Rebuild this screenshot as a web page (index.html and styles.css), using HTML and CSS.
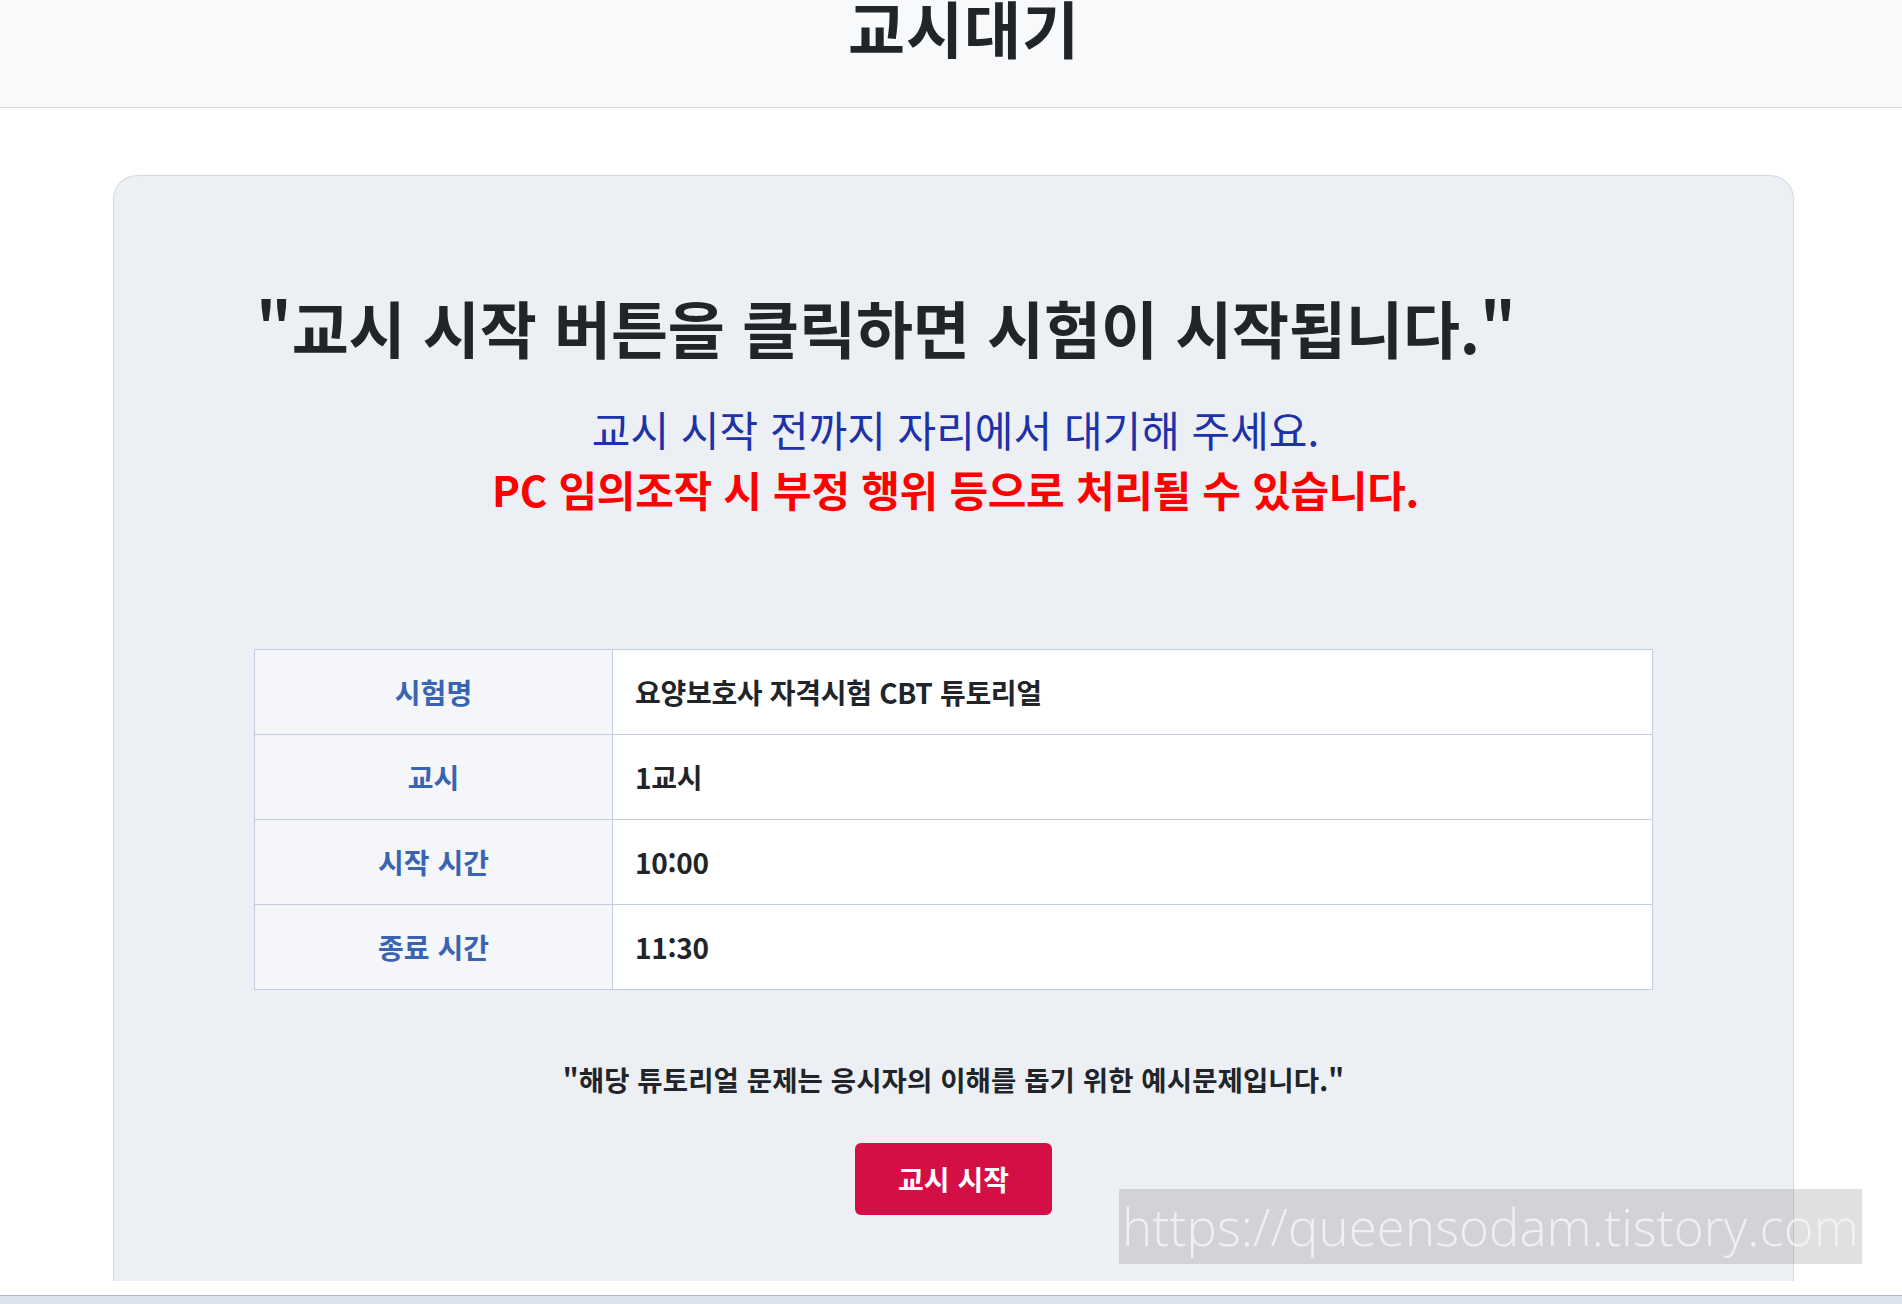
FILE: index.html
```html
<!DOCTYPE html>
<html lang="ko">
<head>
<meta charset="utf-8">
<title>교시대기</title>
<link rel="stylesheet" href="styles.css">
</head>
<body>
<header class="top">
  <h1 class="top-title">교시대기</h1>
</header>
<main class="card">
  <h2 class="lead">"교시 시작 버튼을 클릭하면 시험이 시작됩니다."</h2>
  <div class="notice">
    <p class="notice-wait">교시 시작 전까지 자리에서 대기해 주세요.</p>
    <p class="notice-warn">PC 임의조작 시 부정 행위 등으로 처리될 수 있습니다.</p>
  </div>
  <table class="info">
    <tr><th>시험명</th><td>요양보호사 자격시험 CBT 튜토리얼</td></tr>
    <tr><th>교시</th><td>1교시</td></tr>
    <tr><th>시작 시간</th><td>10:00</td></tr>
    <tr><th>종료 시간</th><td>11:30</td></tr>
  </table>
  <p class="note">"해당 튜토리얼 문제는 응시자의 이해를 돕기 위한 예시문제입니다."</p>
  <div class="actions">
    <button class="start-btn" type="button">교시 시작</button>
  </div>
</main>
<footer class="bottom"></footer>
<div class="watermark">https://queensodam.tistory.com</div>
</body>
</html>
```
FILE: styles.css
```css
* { box-sizing: border-box; }
html, body { margin: 0; padding: 0; }
body {
  background: #ffffff;
  font-family: "Noto Sans CJK KR", "Noto Sans", sans-serif;
  color: #212529;
  overflow: hidden;
  height: 1304px;
  position: relative;
}
.top {
  height: 108px;
  background: #f8f9fa;
  border-bottom: 1px solid #d6dadf;
  overflow: hidden;
}
.top-title {
  margin: -4px 0 0;
  padding-left: 26px;
  text-align: center;
  font-size: 62px;
  line-height: 62px;
  font-weight: 700;
  letter-spacing: 1px;
  color: #212529;
}
.card {
  margin: 67px 108px 0 113px;
  height: 1106px;
  background: #eceff4;
  border: 1px solid #d5d9df;
  border-bottom: none;
  border-radius: 24px 24px 0 0;
  padding: 114px 140px 0;
}
.lead {
  margin: 0;
  padding-left: 2px;
  font-size: 62px;
  line-height: 74px;
  font-weight: 700;
  letter-spacing: -0.1px;
  color: #212529;
  white-space: nowrap;
}
.notice {
  margin-top: 35px;
  text-align: center;
}
.notice p { margin: 0; line-height: 60px; font-size: 42px; }
.notice-wait { color: #1d32a8; font-weight: 400; padding-left: 4px; }
.notice-warn { color: #ff0000; font-weight: 700; letter-spacing: -0.3px; padding-left: 4px; }
.info {
  margin-top: 130px;
  width: 100%;
  border-collapse: collapse;
  font-size: 28px;
}
.info th, .info td {
  border: 1px solid #c3cde0;
  height: 85px;
  padding: 0 22px;
  line-height: 36px;
}
.info th {
  width: 358px;
  background: #f4f6f9;
  color: #3a64b2;
  font-weight: 700;
  text-align: center;
}
.info td {
  background: #ffffff;
  color: #212529;
  font-weight: 700;
  text-align: left;
  letter-spacing: -0.3px;
}
.note {
  margin: 71px 0 0;
  text-align: center;
  font-size: 27.5px;
  line-height: 36px;
  font-weight: 700;
  letter-spacing: 0.1px;
  color: #212529;
}
.actions {
  margin-top: 46px;
  display: flex;
  justify-content: center;
}
.start-btn {
  width: 197px;
  height: 72px;
  border: none;
  border-radius: 6px;
  background: #d30f45;
  color: #ffffff;
  font-family: "Noto Sans CJK KR", sans-serif;
  font-size: 28px;
  font-weight: 700;
  padding: 0;
}
.bottom {
  position: absolute;
  left: 0;
  right: 0;
  top: 1295px;
  height: 9px;
  background: #dce3ee;
  border-top: 1px solid #aeb6c3;
}
.watermark {
  position: absolute;
  left: 1119px;
  top: 1189px;
  width: 743px;
  height: 75px;
  background: rgba(107, 107, 107, 0.21);
  color: rgba(245, 245, 245, 0.85);
  font-family: "Open Sans", sans-serif;
  font-weight: 300;
  font-size: 51px;
  line-height: 75px;
  letter-spacing: 0.1px;
  padding-left: 3px;
  white-space: nowrap;
}
```
